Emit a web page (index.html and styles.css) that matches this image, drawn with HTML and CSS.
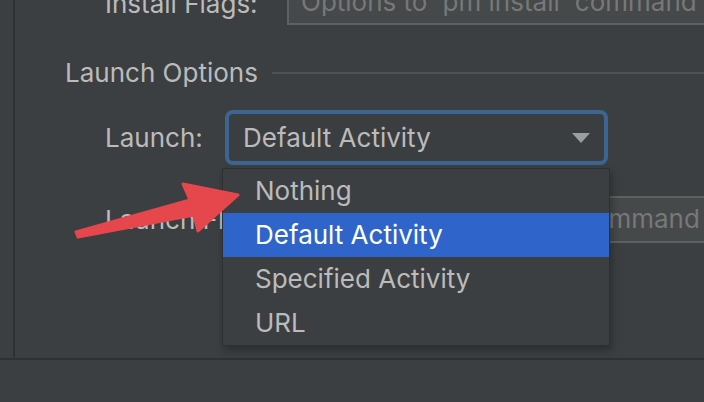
FILE: index.html
```html
<!DOCTYPE html>
<html lang="en">
  <head>
    <meta charset="utf-8" />
    <title>Run Configuration - Launch Options</title>
    <link rel="stylesheet" href="styles.css">
  </head>
  <body>
    <div id="app">
      <div class="main">
        <aside class="gutter"></aside>
        <section class="content">
          <div class="row row-install">
            <label>Install Flags:</label>
            <div class="field">Options to 'pm install' command</div>
          </div>

          <div class="group-title">
            <span>Launch Options</span>
            <hr />
          </div>

          <div class="row row-launch">
            <label>Launch:</label>
            <div class="combo">
              <span>Default Activity</span>
              <svg class="caret" width="18" height="10" viewBox="0 0 18 10"><path d="M0 0 H18 L9 10 Z" /></svg>
            </div>
          </div>

          <div class="row row-install row-flags">
            <label>Launch Flags:</label>
            <div class="field">Options to 'am start' command</div>
          </div>
        </section>
      </div>
      <footer></footer>

      <!-- popup list of the combo, open -->
      <ul class="popup">
        <li>Nothing</li>
        <li class="selected">Default Activity</li>
        <li>Specified Activity</li>
        <li>URL</li>
      </ul>

      <svg class="pointer" width="704" height="402" viewBox="0 0 704 402">
        <path d="M76 232 L190 200 L183 184 L238 195 L198 231 L194 215 L78 237 Z" />
      </svg>
    </div>
  </body>
</html>
```

FILE: styles.css
```css
html,
body {
  margin: 0;
  background: #3c3f41;
  font-family: Inter, "Noto Sans", sans-serif;
  font-size: 26px;
  color: #bbbbbb;
  --panel: #3c3f41;
  --line: #2e3033;
  --field-bg: #45494a;
  --field-border: #5e6163;
}

#app {
  position: relative;
  width: 704px;
  height: 402px;
  overflow: hidden;
  display: flex;
  flex-direction: column;
}

.main {
  height: 358px;
  display: flex;
}

.gutter {
  width: 13px;
  border-right: 2px solid var(--line);
}

.content {
  flex: 1;
  padding-left: 50px;
}

footer {
  flex: 1;
  border-top: 2px solid var(--line);
  background: var(--panel);
}

.row {
  display: grid;
  align-items: center;
  padding-left: 40px;
  white-space: nowrap;
}

.row label {
  line-height: 32px;
}

.row-install {
  grid-template-columns: 182px 1fr;
  height: 46px;
  margin-top: -21px;
}

.row-install label {
  padding-top: 4px;
}

.row-flags {
  grid-template-columns: 202px 1fr;
  height: 47px;
  margin-top: 31px;
}

.row-flags label {
  padding-top: 0;
}

.field {
  height: 100%;
  box-sizing: border-box;
  background: var(--field-bg);
  border: 2px solid var(--field-border);
  border-right: 0;
  padding-left: 12px;
  color: #787878;
  line-height: 42px;
  overflow: hidden;
}

.group-title {
  display: flex;
  align-items: center;
  gap: 14px;
  margin-top: 32px;
  line-height: 32px;
}

.group-title hr {
  flex: 1;
  margin: 0;
  border: 0;
  border-top: 2px solid #4f5254;
}

.row-launch {
  grid-template-columns: 120px 383px;
  margin-top: 21px;
}

.combo {
  height: 55px;
  box-sizing: border-box;
  border: 4px solid #3d6591;
  border-radius: 8px;
  padding: 0 14px;
  display: flex;
  align-items: center;
  justify-content: space-between;
  background: #3b3e40;
}

.caret path {
  fill: #9b9ea1;
}

.popup {
  position: absolute;
  left: 222px;
  top: 168px;
  width: 388px;
  margin: 0;
  padding: 0;
  list-style: none;
  background: #3c3f41;
  border: 1px solid #2d2f31;
  box-sizing: border-box;
  box-shadow: 2px 4px 8px rgba(0, 0, 0, 0.3);
}

.popup li {
  height: 44px;
  line-height: 44px;
  padding-left: 32px;
}

.popup li.selected {
  background: #2f65ca;
  color: #ffffff;
}

.pointer {
  position: absolute;
  left: 0;
  top: 0;
}

.pointer path {
  fill: #e5474d;
  stroke: #e5474d;
  stroke-width: 3;
  stroke-linejoin: round;
}
```
